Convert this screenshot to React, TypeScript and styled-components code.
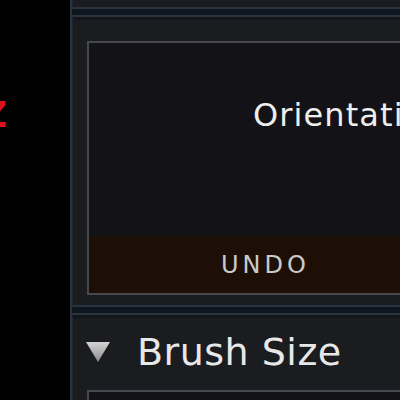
import styled, { createGlobalStyle } from 'styled-components';

const GlobalStyle = createGlobalStyle`
  html, body {
    margin: 0;
    padding: 0;
    background: #000;
    overflow: hidden;
  }
  body {
    font-family: "DejaVu Sans", "Liberation Sans", sans-serif;
  }
`;

const Page = styled.div`
  display: flex;
  width: 400px;
  height: 400px;
  overflow: hidden;
  background: #000;
`;

const Gutter = styled.div`
  width: 70px;
  flex-shrink: 0;
  padding-top: 97px;
  overflow: hidden;
`;

const RedMark = styled.div`
  margin-left: -19px;
  color: #d8121e;
  font-size: 36px;
  font-weight: bold;
  line-height: 1;
`;

const Sidebar = styled.div`
  flex-shrink: 0;
  width: 390px;
  border-left: 2px solid #29313b;
  background: #0e1720;
  display: flex;
  flex-direction: column;
  gap: 6px;
`;

const Panel = styled.section<{ $stub?: boolean }>`
  flex-shrink: 0;
  background: #1a1c20;
  border-top: ${p => (p.$stub ? 'none' : '2px solid #2a333e')};
  border-bottom: 2px solid #2a333e;
  border-left: 1px solid #1f2630;
  box-shadow: ${p => (p.$stub ? 'none' : 'inset 0 3px 0 #141619')};
  height: ${p => (p.$stub ? '7px' : 'auto')};
  padding: ${p => (p.$stub ? '0' : '24px 14px 10px 14px')};
`;

const Frame = styled.div`
  border: 2px solid #45484e;
  background: #131217;
  display: flex;
  flex-direction: column;
`;

const FrameTitle = styled.div`
  height: 193px;
  box-sizing: border-box;
  padding: 56px 0 0 164px;
  color: #eeeeee;
  font-size: 32px;
  line-height: 1;
  letter-spacing: 1.1px;
  white-space: nowrap;
  overflow: hidden;
`;

const UndoBar = styled.div`
  height: 57px;
  background: #1e0f06;
  display: flex;
  align-items: center;
  justify-content: center;
  color: #cacaca;
  font-size: 24px;
  line-height: 1;
  letter-spacing: 4px;
  padding-right: 4px;
`;

const SectionHeader = styled.div`
  display: flex;
  align-items: center;
  gap: 26px;
  margin: -6px 0 19px -2px;
  color: #e8e8e8;
  font-size: 38px;
  line-height: 1;
  letter-spacing: 0.5px;
  white-space: nowrap;
`;

const Caret = styled.svg`
  width: 26px;
  height: 22px;
  flex-shrink: 0;
`;

const EmptyFrame = styled(Frame)`
  height: 120px;
`;

export default function App() {
  return (
    <Page>
      <GlobalStyle />
      <Gutter>
        <RedMark>Z</RedMark>
      </Gutter>
      <Sidebar>
        <Panel $stub />
        <Panel>
          <Frame>
            <FrameTitle>Orientation</FrameTitle>
            <UndoBar>UNDO</UndoBar>
          </Frame>
        </Panel>
        <Panel>
          <SectionHeader>
            <Caret viewBox="0 0 26 22">
              <defs>
                <linearGradient id="caretFill" x1="0" y1="0" x2="0" y2="1">
                  <stop offset="0" stopColor="#d4d4d4" />
                  <stop offset="1" stopColor="#8a8a8a" />
                </linearGradient>
              </defs>
              <polygon points="1,1 25,1 13,21" fill="url(#caretFill)" />
            </Caret>
            Brush Size
          </SectionHeader>
          <EmptyFrame />
        </Panel>
      </Sidebar>
    </Page>
  );
}
